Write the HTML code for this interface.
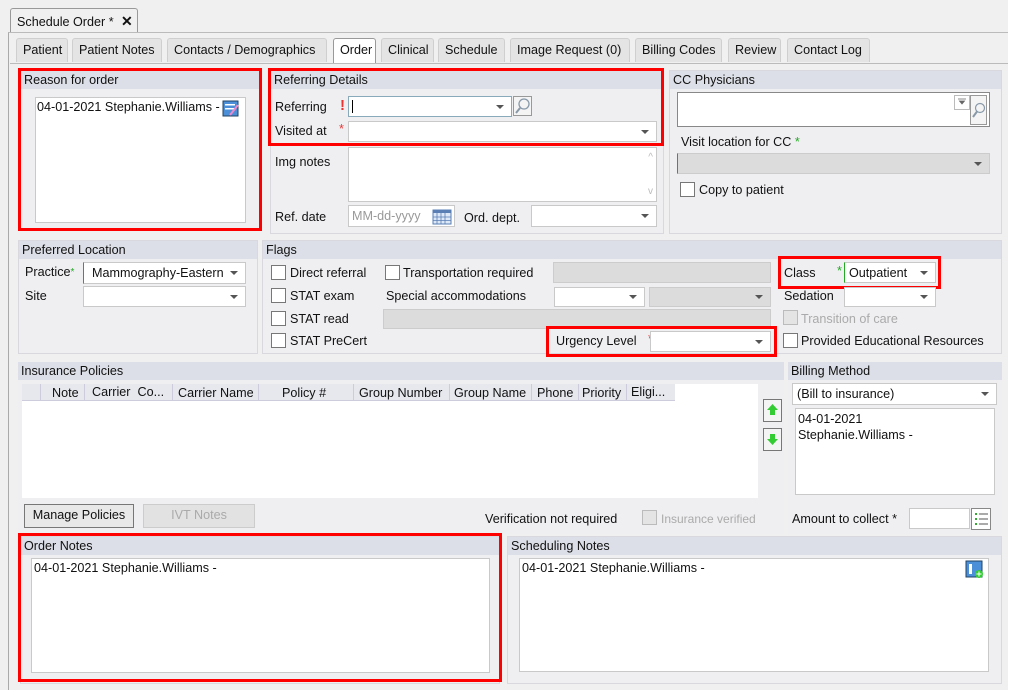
<!DOCTYPE html>
<html><head><style>
*{box-sizing:border-box;margin:0;padding:0}
body{width:1014px;height:697px;background:#fff;font-family:"Liberation Sans",sans-serif;font-size:12.6px;color:#111;position:relative;overflow:hidden}
.a{position:absolute}
.t{position:absolute;white-space:nowrap;line-height:15px}
.tab{position:absolute;height:24px;background:#e4e4e4;border:1px solid #cfcfcf;border-bottom:none;border-radius:3px 3px 0 0;padding:4px 0 0 6px;white-space:nowrap}
.pan{position:absolute;background:#efeff2;border:1px solid #d8d8de}
.hd{position:absolute;left:0;right:0;top:0;height:18px;background:#dcdfe7;padding:2px 0 0 3px;white-space:nowrap}
.in{position:absolute;background:#fff;border:1px solid #c9c9c9}
.dis{position:absolute;background:#dcdcdc;border:1px solid #ccc}
.dd::after{content:"";position:absolute;right:7px;top:50%;margin-top:-2px;border-left:4px solid transparent;border-right:4px solid transparent;border-top:4px solid #555}
.cb{position:absolute;width:15px;height:15px;background:#fff;border:1px solid #777}
.red{position:absolute;border:3px solid #f00}
.btn{position:absolute;background:#e8e8e8;border:1px solid #777;text-align:center;padding-top:3px}
.st{color:#e33}
.gs{color:#2a2}
</style></head><body>
<div class="a" style="left:0;top:0;width:1008px;height:690px;background:#f0f0f0"></div>
<div class="a" style="left:8px;top:32px;width:1000px;height:658px;border-left:1px solid #aaa;border-top:1px solid #bbb"></div>
<div class="tab" style="left:10px;top:8px;width:128px;background:#f0f0f0;border-color:#999">Schedule Order * <b style="font-size:14px">&nbsp;✕</b></div>

<div class="tab" style="left:16px;top:38px;width:52px">Patient</div>
<div class="tab" style="left:72px;top:38px;width:90px">Patient Notes</div>
<div class="tab" style="left:167px;top:38px;width:160px">Contacts / Demographics</div>
<div class="tab" style="left:333px;top:38px;width:43px;background:#fff;border-color:#999;height:26px">Order</div>
<div class="tab" style="left:381px;top:38px;width:53px">Clinical</div>
<div class="tab" style="left:438px;top:38px;width:67px">Schedule</div>
<div class="tab" style="left:510px;top:38px;width:120px">Image Request (0)</div>
<div class="tab" style="left:635px;top:38px;width:87px">Billing Codes</div>
<div class="tab" style="left:728px;top:38px;width:53px">Review</div>
<div class="tab" style="left:787px;top:38px;width:83px">Contact Log</div>
<div class="a" style="left:10px;top:63px;width:998px;height:1px;background:#bbb"></div>

<!-- Reason -->
<div class="pan" style="left:20px;top:70px;width:240px;height:160px"><div class="hd">Reason for order</div></div>
<div class="in" style="left:35px;top:97px;width:211px;height:126px"><span class="t" style="left:1px;top:2px">04-01-2021 Stephanie.Williams -</span>
<svg class="a" style="left:186px;top:2px" width="18" height="17"><rect x="1" y="1" width="15" height="15" fill="#4a8fd8" stroke="#246"/><rect x="3" y="4" width="10" height="1.5" fill="#fff"/><rect x="3" y="8" width="10" height="1.5" fill="#fff"/><path d="M8 15 L16 5" stroke="#e8c" stroke-width="2"/></svg></div>
<div class="red" style="left:18px;top:68px;width:244px;height:163px"></div>

<!-- Referring -->
<div class="pan" style="left:270px;top:70px;width:394px;height:164px"><div class="hd">Referring Details</div></div>
<span class="t" style="left:275px;top:100px">Referring</span><span class="t st" style="left:340px;top:98px;font-weight:bold;font-size:15px">!</span>
<div class="in dd" style="left:348px;top:96px;width:164px;height:21px;border-color:#8ab"><div class="a" style="left:3px;top:3px;width:1px;height:13px;background:#000"></div></div>
<div class="in" style="left:513px;top:96px;width:19px;height:20px;background:#f4f4f4;border-color:#999"><svg width="17" height="18"><circle cx="10" cy="7" r="5" fill="none" stroke="#89a" stroke-width="1.3"/><path d="M6 11 L2 16" stroke="#89a" stroke-width="2"/></svg></div>
<span class="t" style="left:275px;top:124px">Visited at</span><span class="t st" style="left:339px;top:122px">*</span>
<div class="in dd" style="left:348px;top:121px;width:309px;height:21px"></div>
<div class="red" style="left:268px;top:68px;width:396px;height:78px"></div>
<span class="t" style="left:275px;top:155px">Img notes</span>
<div class="in" style="left:348px;top:147px;width:309px;height:55px"><span class="t" style="right:3px;top:2px;color:#bbb;font-size:10px">^</span><span class="t" style="right:3px;top:36px;color:#bbb;font-size:10px">v</span></div>
<span class="t" style="left:275px;top:210px">Ref. date</span>
<div class="in" style="left:348px;top:205px;width:107px;height:22px;color:#999"><span class="t" style="left:3px;top:3px">MM-dd-yyyy</span><svg class="a" style="left:83px;top:2px" width="20" height="17"><rect x="1" y="2" width="18" height="14" fill="#dce8f6" stroke="#5a7fb5"/><rect x="1" y="2" width="18" height="3" fill="#5a7fb5"/><path d="M5 5V16M9 5V16M13 5V16M1 9H19M1 12.5H19" stroke="#5a7fb5" stroke-width=".8"/></svg></div>
<span class="t" style="left:464px;top:211px">Ord. dept.</span>
<div class="in dd" style="left:531px;top:205px;width:126px;height:22px"></div>

<!-- CC -->
<div class="pan" style="left:669px;top:70px;width:333px;height:164px"><div class="hd">CC Physicians</div></div>
<div class="in" style="left:677px;top:92px;width:313px;height:35px;border-color:#888"><div class="a" style="left:276px;top:2px;width:16px;height:15px;border:1px solid #bbb;background:#fff"><svg width="14" height="13"><path d="M3 3h8M4.5 5h5l-2.5 3z" stroke="#666" fill="#666" stroke-width=".8"/></svg></div><div class="a" style="left:292px;top:2px;width:17px;height:30px;border:1px solid #999;background:#f4f4f4"><svg width="15" height="28"><circle cx="9" cy="12" r="4.5" fill="none" stroke="#89a" stroke-width="1.2"/><path d="M6 15.5 L2 21" stroke="#89a" stroke-width="2"/></svg></div></div>
<span class="t" style="left:681px;top:135px">Visit location for CC <span class="gs">*</span></span>
<div class="dis dd" style="left:677px;top:153px;width:313px;height:21px;border-left:1px solid #2a2"></div>
<div class="cb" style="left:680px;top:182px"></div><span class="t" style="left:699px;top:183px">Copy to patient</span>

<!-- Preferred Location -->
<div class="pan" style="left:18px;top:240px;width:240px;height:114px"><div class="hd">Preferred Location</div></div>
<span class="t" style="left:25px;top:265px">Practice<span class="gs" style="font-size:10px;vertical-align:top">*</span></span>
<div class="in dd" style="left:83px;top:262px;width:163px;height:22px;border-left:1px solid #2a2"><span class="t" style="left:8px;top:3px">Mammography-Eastern</span></div>
<span class="t" style="left:25px;top:289px">Site</span>
<div class="in dd" style="left:83px;top:286px;width:163px;height:21px"></div>

<!-- Flags -->
<div class="pan" style="left:262px;top:240px;width:740px;height:114px"><div class="hd">Flags</div></div>
<div class="cb" style="left:271px;top:265px"></div><span class="t" style="left:290px;top:266px">Direct referral</span>
<div class="cb" style="left:385px;top:265px"></div><span class="t" style="left:403px;top:266px">Transportation required</span>
<div class="dis" style="left:553px;top:262px;width:218px;height:21px"></div>
<div class="cb" style="left:271px;top:288px"></div><span class="t" style="left:290px;top:289px">STAT exam</span>
<span class="t" style="left:386px;top:289px">Special accommodations</span>
<div class="in dd" style="left:554px;top:287px;width:91px;height:20px"></div>
<div class="dis dd" style="left:649px;top:287px;width:122px;height:20px"></div>
<div class="cb" style="left:271px;top:311px"></div><span class="t" style="left:290px;top:312px">STAT read</span>
<div class="dis" style="left:383px;top:309px;width:388px;height:20px"></div>
<div class="cb" style="left:271px;top:333px"></div><span class="t" style="left:290px;top:334px">STAT PreCert</span>
<span class="t" style="left:556px;top:334px">Urgency Level</span><span class="t st" style="left:648px;top:332px">*</span>
<div class="in dd" style="left:650px;top:331px;width:121px;height:21px"></div>
<div class="red" style="left:546px;top:326px;width:231px;height:31px"></div>
<span class="t" style="left:784px;top:266px">Class</span><span class="t gs" style="left:837px;top:264px">*</span>
<div class="in dd" style="left:844px;top:262px;width:92px;height:21px;border-left:1px solid #2a2"><span class="t" style="left:4px;top:3px">Outpatient</span></div>
<div class="red" style="left:778px;top:256px;width:163px;height:33px"></div>
<span class="t" style="left:784px;top:289px">Sedation</span>
<div class="in dd" style="left:844px;top:287px;width:92px;height:20px"></div>
<div class="cb" style="left:783px;top:310px;background:#e4e4e4;border-color:#bbb"></div><span class="t" style="left:801px;top:312px;color:#aaa">Transition of care</span>
<div class="cb" style="left:783px;top:333px"></div><span class="t" style="left:801px;top:334px">Provided Educational Resources</span>

<!-- Insurance -->
<div class="pan" style="left:18px;top:362px;width:766px;height:172px;border:none"><div class="hd">Insurance Policies</div></div>
<div class="a" style="left:22px;top:384px;width:736px;height:114px;background:#fff"></div>
<div class="a" style="left:22px;top:384px;width:653px;height:17px;background:#e6e8ee;border-bottom:1px solid #ccd"></div>
<div class="a" style="left:40px;top:384px;width:1px;height:17px;background:#ccd"></div>
<span class="t" style="left:52px;top:386px">Note</span><div class="a" style="left:84px;top:384px;width:1px;height:17px;background:#ccd"></div>
<span class="t" style="left:92px;top:385px">Carrier&nbsp; Co...</span><div class="a" style="left:172px;top:384px;width:1px;height:17px;background:#ccd"></div>
<span class="t" style="left:178px;top:386px">Carrier Name</span><div class="a" style="left:258px;top:384px;width:1px;height:17px;background:#ccd"></div>
<span class="t" style="left:282px;top:386px">Policy #</span><div class="a" style="left:353px;top:384px;width:1px;height:17px;background:#ccd"></div>
<span class="t" style="left:359px;top:386px">Group Number</span><div class="a" style="left:449px;top:384px;width:1px;height:17px;background:#ccd"></div>
<span class="t" style="left:454px;top:386px">Group Name</span><div class="a" style="left:531px;top:384px;width:1px;height:17px;background:#ccd"></div>
<span class="t" style="left:537px;top:386px">Phone</span><div class="a" style="left:578px;top:384px;width:1px;height:17px;background:#ccd"></div>
<span class="t" style="left:582px;top:386px">Priority</span><div class="a" style="left:626px;top:384px;width:1px;height:17px;background:#ccd"></div>
<span class="t" style="left:631px;top:385px">Eligi...</span>
<div class="btn" style="left:24px;top:504px;width:110px;height:24px">Manage Policies</div>
<div class="btn" style="left:143px;top:504px;width:112px;height:24px;color:#aaa;border-color:#ccc;background:#e2e2e2">IVT Notes</div>
<span class="t" style="left:485px;top:512px">Verification not required</span>
<div class="cb" style="left:642px;top:510px;background:#e4e4e4;border-color:#bbb"></div><span class="t" style="left:661px;top:512px;color:#aaa;font-size:12px">Insurance verified</span>
<div class="btn" style="left:763px;top:399px;width:19px;height:23px;background:#f4f4f4"><svg width="13" height="14"><path d="M6.5 1L12 7H9V12H4V7H1Z" fill="#3c3"/></svg></div>
<div class="btn" style="left:763px;top:428px;width:19px;height:23px;background:#f4f4f4"><svg width="13" height="14"><path d="M6.5 13L12 7H9V2H4V7H1Z" fill="#3c3"/></svg></div>

<!-- Billing -->
<div class="pan" style="left:788px;top:362px;width:214px;height:172px;border:none"><div class="hd">Billing Method</div></div>
<div class="in dd" style="left:792px;top:383px;width:205px;height:22px"><span class="t" style="left:4px;top:3px">(Bill to insurance)</span></div>
<div class="in" style="left:795px;top:408px;width:200px;height:87px"><span class="t" style="left:2px;top:2px;line-height:16px;white-space:normal;width:150px">04-01-2021<br>Stephanie.Williams -</span></div>
<span class="t" style="left:792px;top:512px">Amount to collect *</span>
<div class="in" style="left:909px;top:508px;width:61px;height:21px"></div>
<div class="in" style="left:971px;top:508px;width:20px;height:22px;border-color:#888"><svg width="18" height="20"><path d="M3 5h2M3 10h2M3 15h2" stroke="#3a3" stroke-width="2"/><path d="M7 5h9M7 10h9M7 15h9" stroke="#555"/></svg></div>

<!-- Order Notes -->
<div class="pan" style="left:20px;top:536px;width:480px;height:148px"><div class="hd">Order Notes</div></div>
<div class="in" style="left:31px;top:558px;width:459px;height:115px"><span class="t" style="left:2px;top:2px">04-01-2021 Stephanie.Williams -</span></div>
<div class="red" style="left:18px;top:533px;width:484px;height:149px"></div>

<!-- Scheduling Notes -->
<div class="pan" style="left:507px;top:536px;width:495px;height:148px"><div class="hd">Scheduling Notes</div></div>
<div class="in" style="left:519px;top:558px;width:470px;height:114px"><span class="t" style="left:2px;top:2px">04-01-2021 Stephanie.Williams -</span>
<svg class="a" style="left:445px;top:1px" width="19" height="19"><rect x="1" y="1" width="16" height="16" fill="#4a8fd8" stroke="#246"/><rect x="4" y="4" width="3" height="10" fill="#fff"/><circle cx="14" cy="14" r="4" fill="#3c3"/><path d="M14 11.5v5M11.5 14h5" stroke="#fff"/></svg></div>
</body></html>
